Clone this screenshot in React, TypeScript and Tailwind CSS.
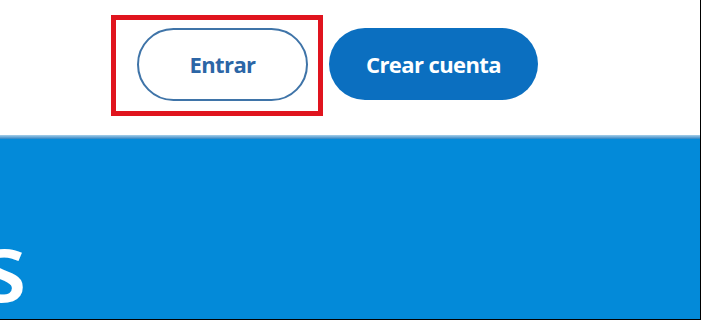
const App = () => {
  return (
    <div className="w-[701px] h-[320px] overflow-hidden border-r border-b border-black bg-white font-['Open_Sans',sans-serif] flex flex-col">
      {/* top bar with auth buttons */}
      <header className="h-[135px] flex items-start pt-[15px] pl-[111px]">
        <div className="border-[5px] border-[#e0141e] pl-[21px] pr-[10px] pt-[8px] pb-[10px]">
          <button className="w-[171px] h-[73px] rounded-full border-2 border-[#3f74a8] text-[#2c66a6] text-[22px] font-bold tracking-[-0.6px]">
            Entrar
          </button>
        </div>
        <button className="ml-[6px] mt-[13px] w-[209px] h-[72px] rounded-full bg-[#0b6fc0] text-white text-[22px] font-bold tracking-[-0.6px]">
          Crear cuenta
        </button>
      </header>

      {/* blue hero */}
      <section className="flex-1 flex flex-col bg-[#038ad9]">
        <div className="h-[4px] bg-gradient-to-b from-[#a6d0ea] to-[#2783c2]" />
        <div className="flex-1 flex items-end pb-[6px]">
          <h1 className="-ml-[20px] text-white text-[96px] leading-none font-semibold">s</h1>
        </div>
      </section>
    </div>
  );
};

export default App;
